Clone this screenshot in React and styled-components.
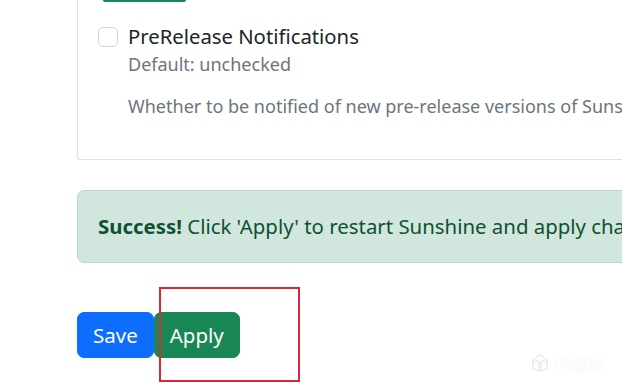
import React from "react";
import styled, { createGlobalStyle } from "styled-components";

const GlobalStyle = createGlobalStyle`
  html, body { margin: 0; padding: 0; background: #fff; }
  body { font-family: "Noto Sans", "Open Sans", "Noto Sans CJK SC", sans-serif; overflow: hidden; }
  * { box-sizing: border-box; }
`;

const Stage = styled.div`
  position: relative;
  width: 622px;
  height: 390px;
  overflow: hidden;
`;

const Content = styled.div`
  display: flex;
  flex-direction: column;
  padding-left: 77px;
`;

const Card = styled.div`
  border: 1px solid #dee2e6;
  border-top: none;
  border-right: none;
  border-radius: 0 0 0 3px;
  margin-right: -40px;
`;

const CardBody = styled.div`
  padding: 0 20px 40px 20px;
`;

const TopButtonEdge = styled.div`
  width: 83px;
  height: 2px;
  margin-left: 5px;
  background: #198754;
  border-radius: 0 0 3px 3px;
`;

const FormCheck = styled.div`
  display: grid;
  grid-template-columns: 30px 1fr;
  margin-top: 19px;
`;

const CheckBox = styled.span`
  display: block;
  width: 20px;
  height: 20px;
  margin-top: 6px;
  border: 1px solid #d3d6d9;
  border-radius: 5px;
  background: #fff;
`;

const CheckText = styled.div`
  display: flex;
  flex-direction: column;
`;

const Label = styled.div`
  font-size: 20.3px;
  line-height: 30px;
  color: #212529;
`;

const Hint = styled.div`
  font-size: 18px;
  line-height: 26px;
  color: #6c757d;
  white-space: nowrap;
  margin-top: ${(p) => p.$gap || 0}px;
`;

const Alert = styled.div`
  margin-top: 30px;
  margin-right: -60px;
  padding: 20px;
  background: #d1e7dd;
  border: 1px solid #badbcc;
  border-radius: 7px;
  color: #0f5132;
  font-size: 20.4px;
  line-height: 31px;
  white-space: nowrap;
  overflow: hidden;
  b { font-weight: 700; }
`;

const ButtonRow = styled.div`
  display: flex;
  margin-top: 49px;
`;

const Button = styled.button`
  font-family: inherit;
  font-size: 20.5px;
  line-height: 30px;
  padding: 7px 15px;
  border: 1px solid ${(p) => p.$color};
  background: ${(p) => p.$color};
  color: #fff;
  border-radius: 7px;
  cursor: pointer;
`;

const Annotation = styled.div`
  position: absolute;
  left: 159px;
  top: 287px;
  width: 141px;
  height: 95px;
  border: 2px solid #d52a35;
  pointer-events: none;
`;

const Watermark = styled.div`
  position: absolute;
  left: 530px;
  top: 350px;
  display: flex;
  align-items: center;
  gap: 4px;
  color: #fff;
  font-family: "Noto Sans CJK SC", sans-serif;
  font-size: 17px;
  font-weight: 700;
  text-shadow: 0 0 1px rgba(0, 0, 0, 0.12);
  opacity: 0.8;
`;

export default function App() {
  return (
    <Stage>
      <GlobalStyle />
      <Content>
        <Card>
          <CardBody>
            <TopButtonEdge />
            <FormCheck>
              <CheckBox />
              <CheckText>
                <Label>PreRelease Notifications</Label>
                <Hint>Default: unchecked</Hint>
                <Hint $gap={16}>
                  Whether to be notified of new pre-release versions of Sunshine
                </Hint>
              </CheckText>
            </FormCheck>
          </CardBody>
        </Card>
        <Alert>
          <b>Success!</b> Click 'Apply' to restart Sunshine and apply changes. This will terminate any running sessions.
        </Alert>
        <ButtonRow>
          <Button $color="#0d6efd">Save</Button>
          <Button $color="#198754">Apply</Button>
        </ButtonRow>
      </Content>
      <Annotation />
      <Watermark>
        <svg width="20" height="20" viewBox="0 0 20 20" fill="none" stroke="#ececec" strokeWidth="2">
          <path d="M3 6 L3 16 L9 18 L9 9 Z" />
          <path d="M11 9 L11 18 L17 16 L17 6 Z" />
          <path d="M6 4 L10 2 L14 4" />
        </svg>
        <span>小黑盒</span>
      </Watermark>
    </Stage>
  );
}
